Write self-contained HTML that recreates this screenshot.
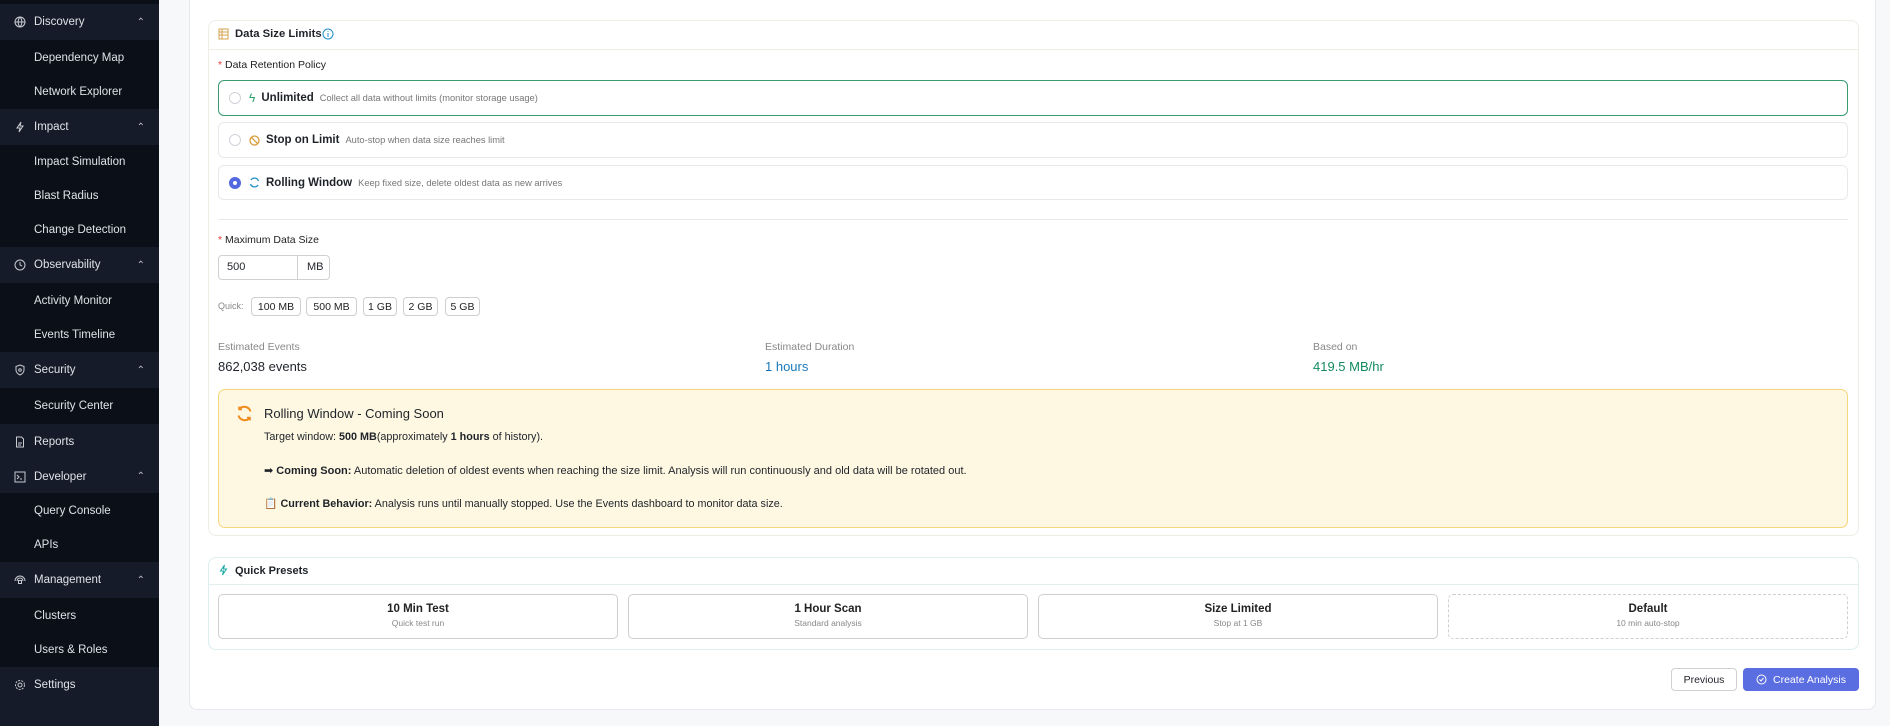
<!DOCTYPE html>
<html><head><meta charset="utf-8"><style>
*{box-sizing:border-box;margin:0;padding:0}
body{width:1890px;height:726px;overflow:hidden;background:#f7f8fa;font-family:"Liberation Sans",Arial,sans-serif;position:relative;color:#1f2329}
.sb{position:absolute;left:0;top:0;width:159px;height:726px;background:#0a0f18}
.sb div{position:absolute;left:0;width:159px;color:#dfe2e7;font-size:11.5px;padding-left:34px;display:flex;align-items:center}
.h{background:#151b28}
.c{background:#0a0f18}
.sb svg{position:absolute;left:14px}
.chev{position:absolute;right:14px;font-size:10px;color:#b8bcc4}
.main{position:absolute;left:189px;top:-10px;width:1687px;height:720px;background:#fff;border:1px solid #e6e8eb;border-radius:8px}
.abs{position:absolute}
.card{position:absolute;border:1px solid #f0ece6;border-radius:8px;background:#fff}
.opt{position:absolute;left:218px;width:1630px;border:1px solid #e8e8e8;border-radius:6px;font-size:11.5px;display:flex;align-items:center}
.radio{width:12px;height:12px;border:1px solid #cfd3d8;border-radius:50%;margin-left:10px;margin-right:8px;background:#fff}
.opt b{font-size:11.5px;color:#1f2329;margin:0 6px 0 6px}
.opt span{color:#777;font-size:9.3px}
.qb{position:absolute;top:297px;height:19px;border:1px solid #cfcfcf;border-radius:4px;font-size:10.5px;display:flex;align-items:center;justify-content:center;color:#222}
.lbl{position:absolute;font-size:10.5px;color:#222}
.pr{position:absolute;top:594px;height:45px;width:400px;border:1px solid #cfcfcf;border-radius:5px;text-align:center}
.pr b{display:block;font-size:11.5px;margin-top:8px;color:#222}
.pr span{display:block;font-size:8.5px;color:#888;margin-top:3px}
</style></head><body>
<div class="sb">
<div class="h" style="top:0;height:4px;background:#0a0f18"></div>
<div class="h" style="top:4px;height:36px"><svg width="12" height="12" viewBox="0 0 12 12" fill="none" stroke="#c8ccd2"><circle cx="6" cy="6" r="5"/><path d="M1 6h10M6 1c-2.5 3-2.5 7 0 10M6 1c2.5 3 2.5 7 0 10"/></svg>Discovery<span class="chev">⌃</span></div>
<div class="c" style="top:40px;height:35px">Dependency Map</div>
<div class="c" style="top:75px;height:34px">Network Explorer</div>
<div class="h" style="top:109px;height:36px"><svg width="12" height="12" viewBox="0 0 12 12" fill="none" stroke="#c8ccd2"><path d="M7 1L3 7h3l-1 4 4-6H6z"/></svg>Impact<span class="chev">⌃</span></div>
<div class="c" style="top:145px;height:34px">Impact Simulation</div>
<div class="c" style="top:179px;height:34px">Blast Radius</div>
<div class="c" style="top:213px;height:34px">Change Detection</div>
<div class="h" style="top:247px;height:36px"><svg width="12" height="12" viewBox="0 0 12 12" fill="none" stroke="#c8ccd2"><circle cx="6" cy="6" r="5"/><path d="M6 3v3l2 1"/></svg>Observability<span class="chev">⌃</span></div>
<div class="c" style="top:283px;height:35px">Activity Monitor</div>
<div class="c" style="top:318px;height:34px">Events Timeline</div>
<div class="h" style="top:352px;height:36px"><svg width="12" height="12" viewBox="0 0 12 12" fill="none" stroke="#c8ccd2"><path d="M6 1l4 1.5v3.5c0 2.5-2 4-4 5-2-1-4-2.5-4-5V2.5z"/><circle cx="6" cy="6" r="1.3"/></svg>Security<span class="chev">⌃</span></div>
<div class="c" style="top:388px;height:36px">Security Center</div>
<div class="h" style="top:424px;height:36px"><svg width="12" height="12" viewBox="0 0 12 12" fill="none" stroke="#c8ccd2"><path d="M2.5 1h5l2 2v8h-7z M4 7h4M4 9h3"/></svg>Reports</div>
<div class="h" style="top:460px;height:33px"><svg width="12" height="12" viewBox="0 0 12 12" fill="none" stroke="#c8ccd2"><rect x="1" y="1" width="10" height="10"/><path d="M3 4l2 2-2 2M6 8h2"/></svg>Developer<span class="chev">⌃</span></div>
<div class="c" style="top:493px;height:35px">Query Console</div>
<div class="c" style="top:528px;height:34px">APIs</div>
<div class="h" style="top:562px;height:36px"><svg width="12" height="12" viewBox="0 0 12 12" fill="none" stroke="#c8ccd2"><path d="M1 7a5 5 0 0 1 10 0M3 7a3 3 0 0 1 6 0"/><rect x="4.5" y="6.5" width="3" height="3"/></svg>Management<span class="chev">⌃</span></div>
<div class="c" style="top:598px;height:35px">Clusters</div>
<div class="c" style="top:633px;height:34px">Users &amp; Roles</div>
<div class="h" style="top:667px;height:36px"><svg width="12" height="12" viewBox="0 0 12 12" fill="none" stroke="#c8ccd2"><circle cx="6" cy="6" r="2"/><circle cx="6" cy="6" r="4.5" stroke-dasharray="2 1.2"/></svg>Settings</div>
<div class="h" style="top:703px;height:23px"></div>
</div>
<div class="main"></div>

<div class="card" style="left:208px;top:20px;width:1651px;height:516px"></div>
<div class="abs" style="left:208px;top:49px;width:1651px;height:1px;background:#f0ece6"></div>
<svg class="abs" style="left:218px;top:28px" width="11" height="12" viewBox="0 0 11 12" fill="none" stroke="#d4a24c"><rect x="1" y="1" width="9" height="10"/><path d="M1 4h9M1 7h9M4 1v10"/></svg>
<div class="abs" style="left:235px;top:28px;font-size:11.3px;font-weight:bold">Data Size Limits</div>
<svg class="abs" style="left:322px;top:28px" width="12" height="12" viewBox="0 0 12 12" fill="none" stroke="#1e90c8"><circle cx="6" cy="6" r="5"/><path d="M6 5v4M6 3v.8"/></svg>
<div class="lbl" style="left:218px;top:59px"><span style="color:#e53935">*</span> Data Retention Policy</div>

<div class="opt" style="top:80px;height:36px;border-color:#3a9b72"><div class="radio"></div><span style="color:#2aa36a;font-size:12px">ϟ</span><b>Unlimited</b><span>Collect all data without limits (monitor storage usage)</span></div>
<div class="opt" style="top:122px;height:36px"><div class="radio"></div><svg width="11" height="11" viewBox="0 0 11 11" fill="none" stroke="#d99a3a" stroke-width="1.3"><circle cx="5.5" cy="5.5" r="4.5"/><path d="M2.3 2.3l6.4 6.4"/></svg><b>Stop on Limit</b><span>Auto-stop when data size reaches limit</span></div>
<div class="opt" style="top:165px;height:35px"><div class="radio" style="border:4px solid #5468e0"></div><svg width="11" height="11" viewBox="0 0 11 11" fill="none" stroke="#1e90c8" stroke-width="1.3"><path d="M9.5 4A4.2 4.2 0 0 0 2 3M1.5 7A4.2 4.2 0 0 0 9 8"/></svg><b>Rolling Window</b><span>Keep fixed size, delete oldest data as new arrives</span></div>

<div class="abs" style="left:218px;top:219px;width:1630px;height:1px;background:#e8e8e8"></div>
<div class="lbl" style="left:218px;top:234px"><span style="color:#e53935">*</span> Maximum Data Size</div>
<div class="abs" style="left:218px;top:255px;width:112px;height:25px;border:1px solid #d0d0d0;border-radius:4px;font-size:11px"><span style="position:absolute;left:8px;top:5px">500</span><div style="position:absolute;left:78px;top:0;bottom:0;width:1px;background:#d0d0d0"></div><span style="position:absolute;left:88px;top:5px">MB</span></div>
<div class="lbl" style="left:218px;top:301px;font-size:9px;color:#888">Quick:</div>
<div class="qb" style="left:251px;width:50px">100 MB</div>
<div class="qb" style="left:306px;width:51px">500 MB</div>
<div class="qb" style="left:363px;width:34px">1 GB</div>
<div class="qb" style="left:403px;width:35px">2 GB</div>
<div class="qb" style="left:445px;width:35px">5 GB</div>

<div class="lbl" style="left:218px;top:341px;color:#888">Estimated Events</div>
<div class="abs" style="left:218px;top:359px;font-size:13px">862,038 events</div>
<div class="lbl" style="left:765px;top:341px;color:#888">Estimated Duration</div>
<div class="abs" style="left:765px;top:359px;font-size:13px;color:#1b78b8">1 hours</div>
<div class="lbl" style="left:1313px;top:341px;color:#888">Based on</div>
<div class="abs" style="left:1313px;top:359px;font-size:13px;color:#138a5e">419.5 MB/hr</div>

<div class="abs" style="left:218px;top:389px;width:1630px;height:139px;background:#fef8e3;border:1px solid #f6d779;border-radius:7px"></div>
<svg class="abs" style="left:236px;top:405px" width="17" height="17" viewBox="0 0 17 17" fill="none" stroke="#f08a1c" stroke-width="2"><path d="M14.5 6.5A6.5 6.5 0 0 0 3 4.5M2.5 10.5A6.5 6.5 0 0 0 14 12.5"/><path d="M3 1.5v3h3M14 15.5v-3h-3" stroke-width="1.5"/></svg>
<div class="abs" style="left:264px;top:406px;font-size:13px">Rolling Window - Coming Soon</div>
<div class="abs" style="left:264px;top:431px;font-size:10.8px">Target window: <b>500 MB</b>(approximately <b>1 hours</b> of history).</div>
<div class="abs" style="left:264px;top:464px;font-size:11px">➡ <b>Coming Soon:</b> Automatic deletion of oldest events when reaching the size limit. Analysis will run continuously and old data will be rotated out.</div>
<div class="abs" style="left:264px;top:497px;font-size:10.8px">📋 <b>Current Behavior:</b> Analysis runs until manually stopped. Use the Events dashboard to monitor data size.</div>

<div class="card" style="left:208px;top:557px;width:1651px;height:93px;border-color:#dceeee"></div>
<div class="abs" style="left:208px;top:584px;width:1651px;height:1px;background:#e3eeee"></div>
<svg class="abs" style="left:218px;top:564px" width="10" height="12" viewBox="0 0 10 12" fill="none" stroke="#16a7a0"><path d="M6.5 1L2.5 7h3l-1 4 4-6h-3z"/></svg>
<div class="abs" style="left:235px;top:565px;font-size:11px;font-weight:bold">Quick Presets</div>
<div class="pr" style="left:218px"><b>10 Min Test</b><span>Quick test run</span></div>
<div class="pr" style="left:628px"><b>1 Hour Scan</b><span>Standard analysis</span></div>
<div class="pr" style="left:1038px"><b>Size Limited</b><span>Stop at 1 GB</span></div>
<div class="pr" style="left:1448px;border-style:dashed"><b>Default</b><span>10 min auto-stop</span></div>

<div class="abs" style="left:1671px;top:668px;width:66px;height:23px;border:1px solid #d0d0d0;border-radius:4px;font-size:10.5px;display:flex;align-items:center;justify-content:center">Previous</div>
<div class="abs" style="left:1743px;top:668px;width:116px;height:23px;background:#5b6ee1;border-radius:4px;font-size:10.5px;color:#fff;display:flex;align-items:center;justify-content:center"><svg width="11" height="11" viewBox="0 0 11 11" fill="none" stroke="#fff" style="margin-right:6px"><circle cx="5.5" cy="5.5" r="4.5"/><path d="M3.5 5.5l1.5 1.5 2.5-3"/></svg>Create Analysis</div>
</body></html>
